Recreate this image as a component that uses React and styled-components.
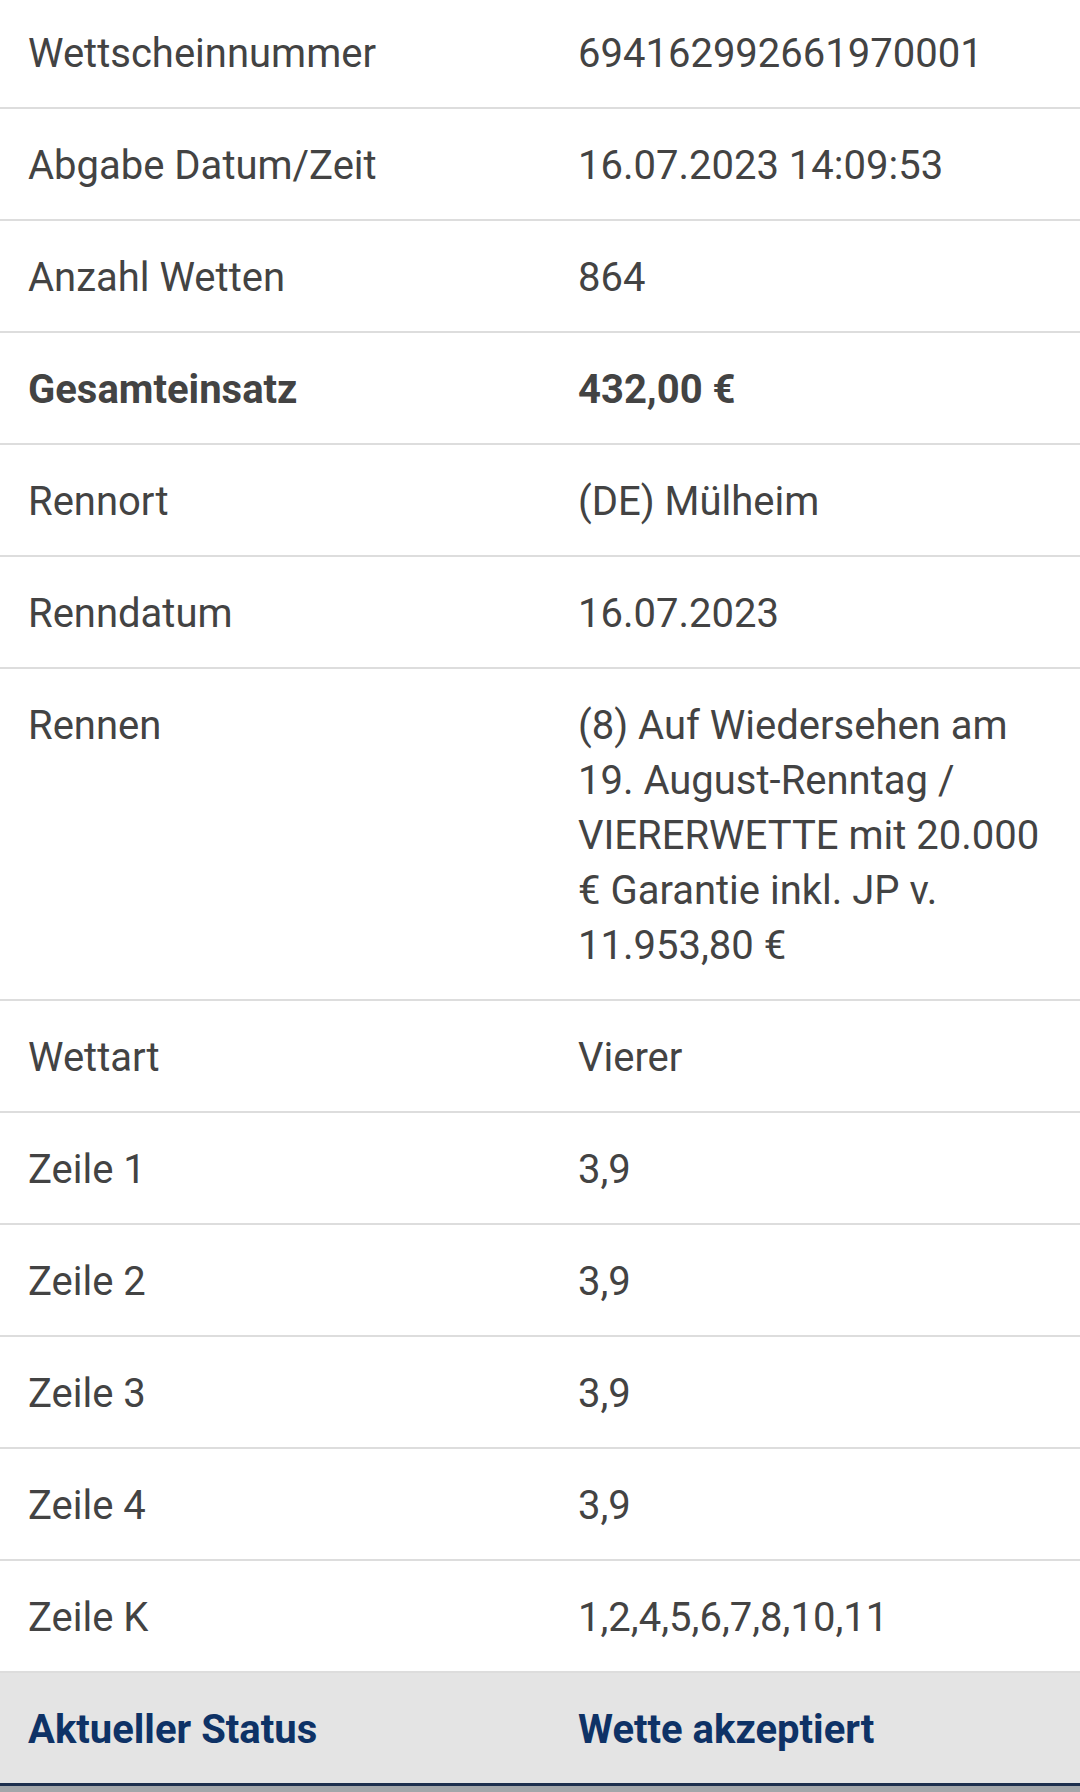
import React from "react"
import styled, {createGlobalStyle} from "styled-components"

const GlobalStyle = createGlobalStyle`
  html, body {
    margin: 0;
    padding: 0;
    background: #ffffff;
  }
  body {
    font-family: Roboto, "Noto Sans", "Liberation Sans", sans-serif;
    -webkit-font-smoothing: antialiased;
  }
`

const rows = [
  {label: "Wettscheinnummer", value: "694162992661970001"},
  {label: "Abgabe Datum/Zeit", value: "16.07.2023 14:09:53"},
  {label: "Anzahl Wetten", value: "864"},
  {label: "Gesamteinsatz", value: "432,00 €", bold: true},
  {label: "Rennort", value: "(DE) Mülheim"},
  {label: "Renndatum", value: "16.07.2023"},
  {label: "Rennen", value: "(8) Auf Wiedersehen am 19. August-Renntag / VIERERWETTE mit 20.000 € Garantie inkl. JP v. 11.953,80 €"},
  {label: "Wettart", value: "Vierer"},
  {label: "Zeile 1", value: "3,9"},
  {label: "Zeile 2", value: "3,9"},
  {label: "Zeile 3", value: "3,9"},
  {label: "Zeile 4", value: "3,9"},
  {label: "Zeile K", value: "1,2,4,5,6,7,8,10,11"},
]

export default function App () {
  return (
    <>
      <GlobalStyle />
      <Page>
        <DetailTable>
          {rows.map((row) => (
            <Row key = {row.label} bold = {row.bold}>
              <Cell>{row.label}</Cell>
              <Cell>{row.value}</Cell>
            </Row>
          ))}
          <StatusRow>
            <Cell>Aktueller Status</Cell>
            <Cell>Wette akzeptiert</Cell>
          </StatusRow>
        </DetailTable>
        <BottomEdge />
      </Page>
    </>
  )
}

const Page = styled.main`
  width: 1080px;
  height: 1792px;
  overflow: hidden;
  display: flex;
  flex-direction: column;
  background: #ffffff;
`

const DetailTable = styled.section`
  display: flex;
  flex-direction: column;
  margin-top: -3px;
`

const Row = styled.div`
  display: grid;
  grid-template-columns: 550px 1fr;
  border-bottom: 2px solid #dddddd;
  color: #434343;
  font-size: 40px;
  line-height: 55px;
  font-weight: ${props => props.bold ? 700 : 400};
`

const StatusRow = styled(Row)`
  background: #e4e4e4;
  border-bottom: none;
  color: #0e3266;
  font-weight: 700;
`

const Cell = styled.div`
  padding: 29px 28px 26px 28px;
`

const BottomEdge = styled.div`
  flex: 1;
  border-top: 3px solid #1c2f4e;
  background: #a2a6aa;
`
